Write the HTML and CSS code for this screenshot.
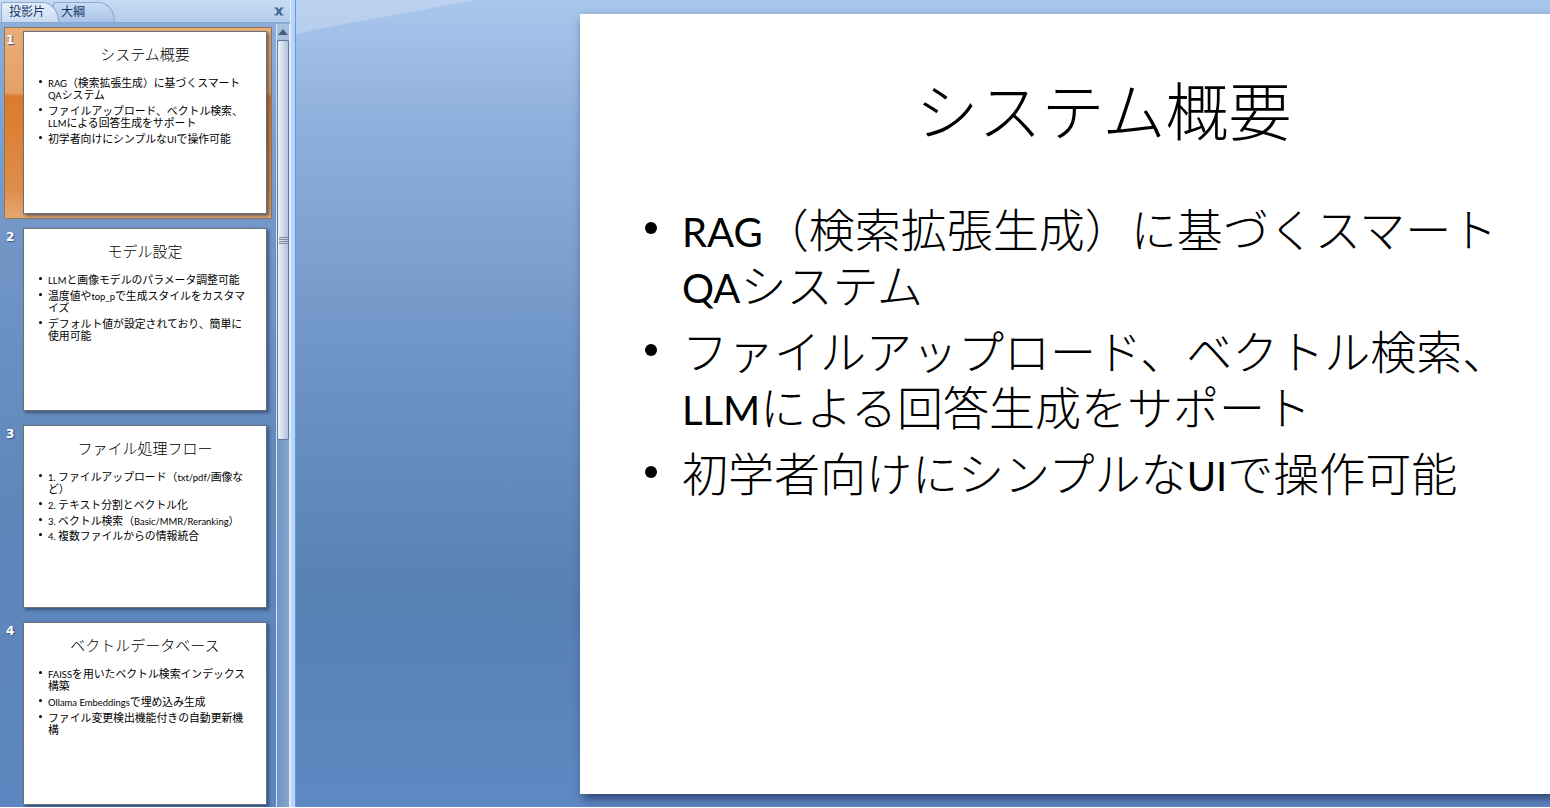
FILE: index.html
```html
<!DOCTYPE html>
<html lang="ja">
<head>
<meta charset="utf-8">
<title>システム概要</title>
<link rel="stylesheet" href="styles.css">
</head>
<body>
<div class="app">
  <aside class="panel">
    <div class="tabbar">
      <div class="tab tab-active">投影片</div>
      <div class="tab tab-next">大綱</div>
      <svg class="close" width="10" height="9" viewBox="0 0 10 9" aria-hidden="true"><path d="M0.5 0.5h3l1.5 2.2 1.5-2.2h3v1h-1L6.6 4.5l1.9 3h1v1h-3L5 6.3 3.500 8.500h-3v-1h1l1.900-3-1.900-3h-1z" fill="#47688f"/></svg>
    </div>
    <div class="panel-body">
      <div class="thumbs">
        <div class="row row-selected">
          <span class="num">1</span>
          <div class="thumb">
            <div class="t-title">システム概要</div>
            <ul class="t-list">
              <li><span class="lat">RAG</span>（検索拡張生成）に基づくスマート<br><span class="lat">QA</span>システム</li>
              <li>ファイルアップロード、ベクトル検索、<br><span class="lat">LLM</span>による回答生成をサポート</li>
              <li>初学者向けにシンプルな<span class="lat">UI</span>で操作可能</li>
            </ul>
          </div>
        </div>
        <div class="row">
          <span class="num">2</span>
          <div class="thumb">
            <div class="t-title">モデル設定</div>
            <ul class="t-list">
              <li><span class="lat">LLM</span>と画像モデルのパラメータ調整可能</li>
              <li>温度値や<span class="lat">top_p</span>で生成スタイルをカスタマ<br>イズ</li>
              <li>デフォルト値が設定されており、簡単に<br>使用可能</li>
            </ul>
          </div>
        </div>
        <div class="row">
          <span class="num">3</span>
          <div class="thumb">
            <div class="t-title">ファイル処理フロー</div>
            <ul class="t-list">
              <li><span class="lat">1. </span>ファイルアップロード（<span class="lat">txt/pdf/</span>画像な<br>ど）</li>
              <li><span class="lat">2. </span>テキスト分割とベクトル化</li>
              <li><span class="lat">3. </span>ベクトル検索（<span class="lat">Basic/MMR/Reranking</span>）</li>
              <li><span class="lat">4. </span>複数ファイルからの情報統合</li>
            </ul>
          </div>
        </div>
        <div class="row">
          <span class="num">4</span>
          <div class="thumb">
            <div class="t-title">ベクトルデータベース</div>
            <ul class="t-list">
              <li><span class="lat">FAISS</span>を用いたベクトル検索インデックス<br>構築</li>
              <li><span class="lat">Ollama Embeddings</span>で埋め込み生成</li>
              <li>ファイル変更検出機能付きの自動更新機<br>構</li>
            </ul>
          </div>
        </div>
      </div>
      <div class="scrollbar">
        <div class="sb-up"><svg width="10" height="6" viewBox="0 0 10 6"><path d="M5 0 L10 6 H0 Z" fill="#4b5f7e"/></svg></div>
        <div class="sb-thumb"><span class="grip"></span></div>
        <div class="sb-rest"></div>
      </div>
    </div>
  </aside>
  <div class="splitter"></div>
  <main class="stage">
    <section class="slide">
      <h1 class="s-title">システム概要</h1>
      <ul class="s-list">
        <li><span class="lat">RAG</span>（検索拡張生成）に基づくスマート<br><span class="lat">QA</span>システム</li>
        <li>ファイルアップロード、ベクトル検索、<br><span class="lat">LLM</span>による回答生成をサポート</li>
        <li>初学者向けにシンプルな<span class="lat">UI</span>で操作可能</li>
      </ul>
    </section>
  </main>
</div>
</body>
</html>
```
FILE: styles.css
```css
* { box-sizing: border-box; }
html, body { margin: 0; height: 100%; overflow: hidden; }
body { font-family: "Noto Sans CJK JP", sans-serif; background: #fff; }
ul { list-style: none; margin: 0; padding: 0; }
.lat { font-family: "Lato", sans-serif; font-weight: 400; font-size: .87em; line-height: 0; }

.app { display: flex; width: 1550px; height: 807px; overflow: hidden; }

/* Left panel */
.panel { width: 290px; flex: none; display: flex; flex-direction: column; background: linear-gradient(180deg, #8fb0db 0, #769ac9 180px, #5f87ba 500px, #5d86c0 808px); }
.tabbar { height: 23px; flex: none; display: flex; align-items: flex-end; background: linear-gradient(180deg, #c8daf2, #b4cdec); border-bottom: 1px solid #8aa9d2; padding-left: 1px; }
.tab { height: 20px; font-size: 12px; line-height: 15px; color: #15375f; font-family: "Noto Sans CJK TC", sans-serif; white-space: nowrap; border: 1px solid #8aa9d2; border-bottom: 0; border-radius: 3px 16px 0 0 / 3px 20px 0 0; padding-left: 7px; }
.tab-active { width: 58px; position: relative; background: linear-gradient(180deg, #e6effb, #c9dbf2); }
.tab-next { width: 62px; margin-left: -6px; padding-left: 7px; background: linear-gradient(180deg, #c9dcf4, #a9c4e8); }
.close { margin-left: auto; margin-right: 6px; align-self: center; }
.panel-body { flex: 1; min-height: 0; display: flex; padding-top: 1px; }
.thumbs { flex: 1; min-width: 0; padding: 3px 0 0 4px; display: flex; flex-direction: column; gap: 5px; }
.row { width: 268px; height: 192px; flex: none; padding: 4px 0 0 20px; position: relative; }
.row-selected { background: linear-gradient(180deg, #e9ad78 0, #e6a066 34%, #dc7a2b 36%, #de8d4a 85%, #e5a874 100%); border: 1px solid #8a7a58; padding: 3px 0 0 19px; }
.num { position: absolute; left: 2px; top: 6px; font: bold 12px/14px "DejaVu Sans", sans-serif; color: #fff; text-shadow: 1px 1px 1px #33557f; }
.row-selected .num { left: 1px; top: 5px; }
.thumb { width: 244px; height: 183px; margin-left: -1px; background: #fff; border: 1px solid #6a6f78; box-shadow: 2px 2px 3px rgba(30,45,80,.6); padding: 13px 0 0 0; }
.t-title { text-align: center; font-weight: 300; font-size: 15px; line-height: 18px; color: #000; }
.t-list { margin-top: 13px; padding-left: 24px; font-size: 10.85px; font-weight: 400; line-height: 12.3px; color: #000; white-space: nowrap; }
.t-list li { position: relative; margin-bottom: 3.4px; }
.t-list li::before { content: ""; position: absolute; left: -9px; top: 4px; width: 3px; height: 3px; border-radius: 50%; background: #000; }

/* Scrollbar */
.scrollbar { width: 14px; flex: none; display: flex; flex-direction: column; background: linear-gradient(90deg, #6f93c2, #86a4cb); border-left: 1px solid #dbe6f4; border-right: 1px solid #dbe6f4; }
.sb-up { height: 16px; flex: none; display: flex; align-items: center; justify-content: center; background: #a9c1e0; }
.sb-thumb { height: 400px; flex: none; display: flex; align-items: center; justify-content: center; background: linear-gradient(90deg, #edf2f9 0, #d4deec 45%, #b3c4dd 100%); border: 1px solid #5e7ba6; border-radius: 2px; }
.grip { display: block; width: 9px; height: 7px; background: repeating-linear-gradient(180deg, #7d8a9c 0 1px, transparent 1px 2px); }
.sb-rest { flex: 1; }

.splitter { width: 6px; flex: none; background: #b7d4fb; border-left: 1px solid #e2edfb; border-right: 1px solid #6b97d8; }

/* Stage */
.stage { flex: 1; min-width: 0; position: relative; padding: 14px 0 0 284px; overflow: hidden; background: linear-gradient(180deg, #a9c6ec 0, #8fb0dc 120px, #6f95c6 350px, #5780b3 600px, #5e88c2 807px); }
.stage::before { content: ""; position: absolute; left: 0; top: 0; width: 180px; height: 34px; background: rgba(255,255,255,.22); clip-path: polygon(0 0, 100% 0, 96% 3%, 58% 41%, 30% 68%, 0 100%); }
.slide { position: relative; width: 1040px; height: 780px; background: #fff; box-shadow: 3px 5px 9px rgba(30,45,85,.7); padding-top: 52px; }
.s-title { margin: 0; padding-left: 7px; text-align: center; font-weight: 300; font-size: 63px; line-height: 84px; color: #000; }
.s-list { margin-top: 49px; padding-left: 102px; font-size: 46px; font-weight: 300; line-height: 56px; color: #000; white-space: nowrap; }
.s-list li { position: relative; margin-bottom: 10px; }
.s-list li::before { content: ""; position: absolute; left: -37px; top: 23px; width: 12px; height: 12px; border-radius: 50%; background: #000; }
```
